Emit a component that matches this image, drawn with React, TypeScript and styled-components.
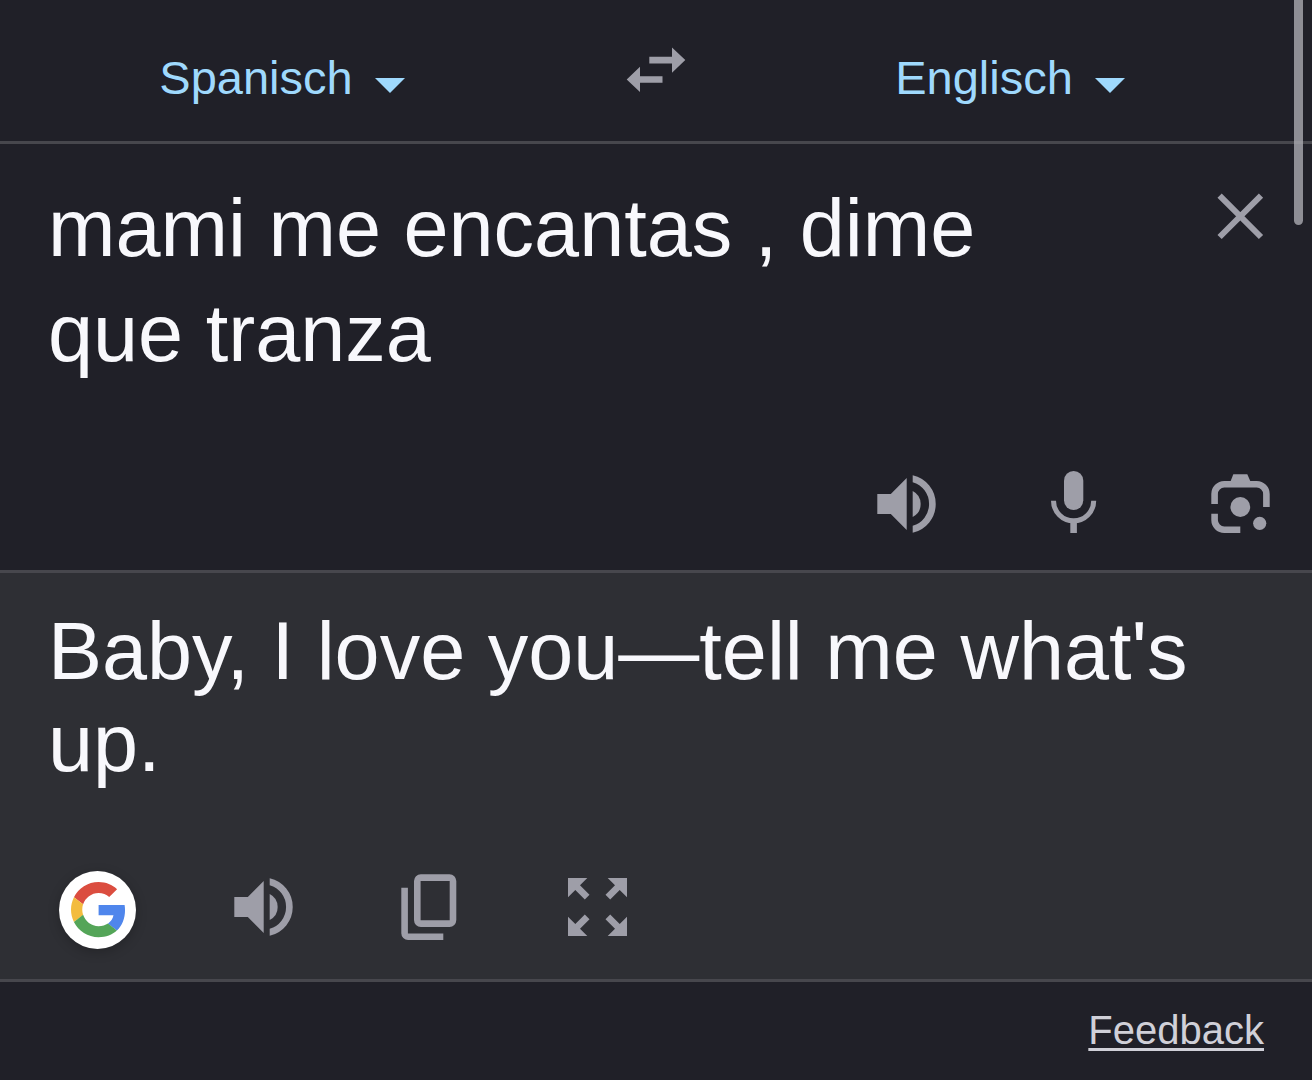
import React, { useState } from 'react';
import styled, { createGlobalStyle } from 'styled-components';

const color = {
  page: '#202028',
  panel: '#2e2f34',
  line: '#47474d',
  text: '#f8f8fc',
  accent: '#9fd9fd',
  icon: '#9e9ea8',
  link: '#d0d0d8',
};

const GlobalStyle = createGlobalStyle`
  * { box-sizing: border-box; }
  body {
    margin: 0;
    background: ${color.page};
    color: ${color.text};
    font-family: "Liberation Sans", Arial, sans-serif;
  }
`;

const Page = styled.div`
  position: relative;
  display: flex;
  flex-direction: column;
  min-height: 100vh;
`;

const ScrollThumb = styled.div`
  position: absolute;
  top: 0;
  right: 9px;
  width: 9px;
  height: 225px;
  border-radius: 0 0 5px 5px;
  background: rgba(170, 170, 176, 0.8);
`;

const Header = styled.header`
  display: grid;
  grid-template-columns: 1fr auto 1fr;
  align-items: center;
  height: 144px;
  border-bottom: 3px solid ${color.line};
`;

const Language = styled.label<{ $side: 'start' | 'end' }>`
  display: flex;
  align-items: center;
  justify-content: center;
  gap: 22px;
  padding: ${(p) => (p.$side === 'start' ? '14px 52px 0 0' : '14px 0 0 12px')};
`;

const LanguageSelect = styled.select`
  appearance: none;
  field-sizing: content;
  margin: 0;
  padding: 0;
  border: 0;
  background: transparent;
  color: ${color.accent};
  font: 47px/56px "Liberation Sans", Arial, sans-serif;
`;

const Caret = styled.span`
  margin-top: 16px;
  border: 15px solid transparent;
  border-top-color: ${color.accent};
  border-bottom: 0;
`;

const Section = styled.section<{ $raised?: boolean }>`
  display: flex;
  flex-direction: column;
  gap: 78px;
  padding: 32px 32px ${(p) => (p.$raised ? 30 : 26)}px 48px;
  border-bottom: 3px solid ${color.line};
  background: ${(p) => (p.$raised ? color.panel : 'transparent')};
`;

const SourceRow = styled.div`
  display: flex;
  align-items: flex-start;
  gap: 96px;
`;

const SourceText = styled.textarea`
  flex: 1;
  min-width: 0;
  height: 210px;
  margin: 0;
  padding: 0;
  border: 0;
  outline: 0;
  resize: none;
  overflow: hidden;
  background: transparent;
  color: inherit;
  font: 81px/105px "Liberation Sans", Arial, sans-serif;
`;

const Translation = styled.p`
  margin: 0;
  font-size: 81px;
  line-height: 92px;
`;

const Actions = styled.div<{ $align: 'start' | 'end' }>`
  display: flex;
  justify-content: flex-${(p) => p.$align};
  gap: 87px;
  padding-left: 11px;
`;

const IconButton = styled.button`
  display: block;
  flex: none;
  width: 80px;
  height: 80px;
  padding: 0;
  border: 0;
  background: transparent;
  color: ${color.icon};
  cursor: pointer;

  svg { display: block; }
`;

const GoogleLink = styled.a`
  flex: none;
  width: 77px;
  height: 78px;
  margin-top: 4px;
  border-radius: 50%;
  background: #fff;
  box-shadow: 0 3px 12px rgba(0, 0, 0, 0.22);

  svg { display: block; }
`;

const Footer = styled.footer`
  display: flex;
  justify-content: flex-end;
  padding: 24px 48px;
`;

const FeedbackLink = styled.a`
  color: ${color.link};
  font-size: 40px;
  line-height: 48px;
  text-decoration: underline;
  text-decoration-thickness: 3px;
  text-underline-offset: 4px;
  text-decoration-skip-ink: none;
`;

const Icon = ({ children }: { children: React.ReactNode }) => (
  <svg width="80" height="80" viewBox="0 0 80 80" fill="currentColor" aria-hidden="true">
    {children}
  </svg>
);

const SwapIcon = () => (
  <Icon>
    <path d="M33.3 25.8H56V16.5L69.3 29.1L56 41.8V32.4H33.3Z" />
    <path d="M46.5 45.2H24V35.7L10.7 48.4L24 61V51.8H46.5Z" />
  </Icon>
);

const CloseIcon = () => (
  <Icon>
    <path d="M19.6 19.6L61 61M61 19.6L19.6 61" fill="none" stroke="currentColor" strokeWidth="6" />
  </Icon>
);

const VolumeIcon = () => (
  <Icon>
    <path d="M11.3 30H24.8L40.7 14V66L24.8 50H11.3Z" />
    <path d="M46.7 27A14.6 14.6 0 0 1 46.7 53Z" />
    <path d="M46.7 11.3A29.4 29.4 0 0 1 46.7 68.7V61.8A22.7 22.7 0 0 0 46.7 18.2Z" />
  </Icon>
);

const MicIcon = () => (
  <Icon>
    <rect x="31" y="7" width="19.3" height="39" rx="9.65" />
    <path d="M20.5 36.7A20.1 20.1 0 0 0 60.7 36.7" fill="none" stroke="currentColor" strokeWidth="5" />
    <path d="M37.3 56H43.9V69H37.3Z" />
  </Icon>
);

const LensIcon = () => (
  <Icon>
    <g fill="none" stroke="currentColor" strokeWidth="6.6">
      <path d="M14.6 40V30A9.7 9.7 0 0 1 24.3 20.3H56.7A9.7 9.7 0 0 1 66.4 30V43" />
      <path d="M14.6 49.7V56A9.7 9.7 0 0 0 24.3 65.7H40.3" />
    </g>
    <path d="M33.3 10.3H47.3L50.7 18H30.3Z" />
    <circle cx="40.3" cy="43" r="9.9" />
    <circle cx="59.7" cy="59.3" r="6.6" />
  </Icon>
);

const CopyIcon = () => (
  <Icon>
    <g fill="none" stroke="currentColor" strokeWidth="6.6">
      <rect x="27.3" y="10.6" width="35.7" height="46" rx="3.5" />
      <path d="M14.6 20.7V66.2A3.5 3.5 0 0 0 18.1 69.7H53.3" />
    </g>
  </Icon>
);

const ExpandIcon = () => {
  const arrow = 'M11 11H30.3L23 18.3L32.5 27.8L27.8 32.5L18.3 23L11 30.3Z';
  return (
    <Icon>
      <path d={arrow} />
      <path d={arrow} transform="matrix(-1 0 0 1 81 0)" />
      <path d={arrow} transform="matrix(1 0 0 -1 0 80)" />
      <path d={arrow} transform="matrix(-1 0 0 -1 81 80)" />
    </Icon>
  );
};

const GoogleLogo = () => (
  <svg width="77" height="78" viewBox="0 0 77 78" aria-hidden="true">
    <g transform="translate(12 11) scale(1.15)">
      <path fill="#db4d3f" d="M24 9.5c3.54 0 6.71 1.22 9.21 3.6l6.85-6.85C35.9 2.38 30.47 0 24 0 14.62 0 6.51 5.38 2.56 13.22l7.98 6.19C12.43 13.72 17.74 9.5 24 9.5z" />
      <path fill="#4f86ec" d="M46.98 24.55c0-1.57-.15-3.09-.38-4.55H24v9.02h12.94c-.58 2.96-2.26 5.48-4.78 7.18l7.73 6c4.51-4.18 7.09-10.36 7.09-17.65z" />
      <path fill="#f3bc3e" d="M10.53 28.59c-.48-1.45-.76-2.99-.76-4.59s.27-3.14.76-4.59l-7.98-6.19C.92 16.46 0 20.12 0 24c0 3.88.92 7.54 2.56 10.78l7.97-6.19z" />
      <path fill="#54a558" d="M24 48c6.48 0 11.93-2.13 15.89-5.81l-7.73-6c-2.15 1.45-4.92 2.3-8.16 2.3-6.26 0-11.57-4.22-13.47-9.91l-7.98 6.19C6.51 42.62 14.62 48 24 48z" />
    </g>
  </svg>
);

export default function App() {
  const [source, setSource] = useState('mami me encantas , dime que tranza');

  return (
    <>
      <GlobalStyle />
      <Page>
        <Header>
          <Language $side="start">
            <LanguageSelect aria-label="Ausgangssprache" defaultValue="es">
              <option value="es">Spanisch</option>
            </LanguageSelect>
            <Caret />
          </Language>
          <IconButton type="button" aria-label="Sprachen tauschen">
            <SwapIcon />
          </IconButton>
          <Language $side="end">
            <LanguageSelect aria-label="Zielsprache" defaultValue="en">
              <option value="en">Englisch</option>
            </LanguageSelect>
            <Caret />
          </Language>
        </Header>

        <Section>
          <SourceRow>
            <SourceText
              aria-label="Ausgangstext"
              spellCheck={false}
              value={source}
              onChange={(e) => setSource(e.target.value)}
            />
            <IconButton type="button" aria-label="Text löschen" onClick={() => setSource('')}>
              <CloseIcon />
            </IconButton>
          </SourceRow>
          <Actions $align="end">
            <IconButton type="button" aria-label="Ausgangstext anhören"><VolumeIcon /></IconButton>
            <IconButton type="button" aria-label="Spracheingabe"><MicIcon /></IconButton>
            <IconButton type="button" aria-label="Kamera"><LensIcon /></IconButton>
          </Actions>
        </Section>

        <Section $raised>
          <Translation>Baby, I love you—tell me what's up.</Translation>
          <Actions $align="start">
            <GoogleLink href="#google" aria-label="Google"><GoogleLogo /></GoogleLink>
            <IconButton type="button" aria-label="Übersetzung anhören"><VolumeIcon /></IconButton>
            <IconButton type="button" aria-label="Kopieren"><CopyIcon /></IconButton>
            <IconButton type="button" aria-label="Vollbild"><ExpandIcon /></IconButton>
          </Actions>
        </Section>

        <Footer>
          <FeedbackLink href="#feedback">Feedback</FeedbackLink>
        </Footer>
        <ScrollThumb />
      </Page>
    </>
  );
}
